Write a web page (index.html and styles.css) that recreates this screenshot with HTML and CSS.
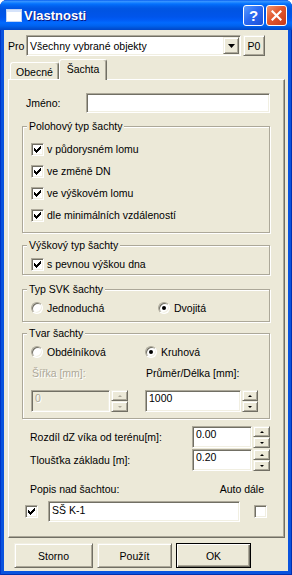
FILE: index.html
```html
<!DOCTYPE html>
<html lang="cs">
<head>
<meta charset="utf-8">
<title>Vlastnosti</title>
<link rel="stylesheet" href="styles.css">
</head>
<body>
<div class="window">
  <div class="titlebar">
    <svg class="app-icon" width="16" height="13" viewBox="0 0 16 13"><rect x="0.5" y="0.5" width="15" height="12" fill="#fff" stroke="#BFD3F5"/><rect x="1" y="1" width="14" height="2" fill="#D6E3FA"/></svg>
    <span class="title">Vlastnosti</span>
    <span class="tb-btn help">?</span>
    <span class="tb-btn close"><svg width="11" height="11" viewBox="0 0 11 11"><path d="M1.5 1.5 L9.5 9.5 M9.5 1.5 L1.5 9.5" stroke="#fff" stroke-width="2.2" stroke-linecap="square"/></svg></span>
  </div>
  <div class="client">
    <div class="row-pro">
      <span class="lbl-pro">Pro</span>
      <div class="combo sunken">
        <span class="combo-text">Všechny vybrané objekty</span>
        <span class="combo-btn raised"><svg width="7" height="4" viewBox="0 0 7 4"><polygon points="0,0 7,0 3.5,4" fill="#000"/></svg></span>
      </div>
      <button class="btn raised btn-p0">P0</button>
    </div>
    <div class="tabs">
      <div class="tab">Obecné</div>
      <div class="tab active">Šachta</div>
    </div>
    <div class="panel">
      <div class="row-name">
        <span class="lbl-name">Jméno:</span>
        <div class="edit sunken name-edit"></div>
      </div>

      <fieldset class="grp grp1">
        <legend>Polohový typ šachty</legend>
        <div class="row r22"><span class="chk sunken"><svg width="7" height="7" viewBox="0 0 7 7"><path d="M0 2h1v1h1v1h1v-1h1v-1h1v-1h1v-1h1v3h-1v1h-1v1h-1v1h-1v1h-1v-1h-1v-1h-1z" fill="#000"/></svg></span><span>v půdorysném lomu</span></div>
        <div class="row r22"><span class="chk sunken"><svg width="7" height="7" viewBox="0 0 7 7"><path d="M0 2h1v1h1v1h1v-1h1v-1h1v-1h1v-1h1v3h-1v1h-1v1h-1v1h-1v1h-1v-1h-1v-1h-1z" fill="#000"/></svg></span><span>ve změně DN</span></div>
        <div class="row r22"><span class="chk sunken"><svg width="7" height="7" viewBox="0 0 7 7"><path d="M0 2h1v1h1v1h1v-1h1v-1h1v-1h1v-1h1v3h-1v1h-1v1h-1v1h-1v1h-1v-1h-1v-1h-1z" fill="#000"/></svg></span><span>ve výškovém lomu</span></div>
        <div class="row r22"><span class="chk sunken"><svg width="7" height="7" viewBox="0 0 7 7"><path d="M0 2h1v1h1v1h1v-1h1v-1h1v-1h1v-1h1v3h-1v1h-1v1h-1v1h-1v1h-1v-1h-1v-1h-1z" fill="#000"/></svg></span><span>dle minimálních vzdáleností</span></div>
      </fieldset>

      <fieldset class="grp grp2">
        <legend>Výškový typ šachty</legend>
        <div class="row r18"><span class="chk sunken"><svg width="7" height="7" viewBox="0 0 7 7"><path d="M0 2h1v1h1v1h1v-1h1v-1h1v-1h1v-1h1v3h-1v1h-1v1h-1v1h-1v1h-1v-1h-1v-1h-1z" fill="#000"/></svg></span><span>s pevnou výškou dna</span></div>
      </fieldset>

      <fieldset class="grp grp3">
        <legend>Typ SVK šachty</legend>
        <div class="row r18">
          <div class="col-a3"><span class="rad"></span><span>Jednoduchá</span></div>
          <div class="col-b"><span class="rad on"></span><span>Dvojitá</span></div>
        </div>
      </fieldset>

      <fieldset class="grp grp4">
        <legend>Tvar šachty</legend>
        <div class="row r18">
          <div class="col-a4"><span class="rad"></span><span>Obdélníková</span></div>
          <div class="col-b"><span class="rad on"></span><span>Kruhová</span></div>
        </div>
        <div class="row r18 lbl-row">
          <div class="col-a4"><span class="disabled">Šířka [mm]:</span></div>
          <div class="col-b"><span class="lbl-b">Průměr/Délka [mm]:</span></div>
        </div>
        <div class="row spin-row">
          <div class="col-a4">
            <div class="spin">
              <div class="edit sunken edit-dis w79"><span class="dis-text">0</span></div>
              <div class="spin-btns"><span class="sb raised"><i class="up dis"></i></span><span class="sb raised"><i class="down dis"></i></span></div>
            </div>
          </div>
          <div class="col-b">
            <div class="spin">
              <div class="edit sunken w96">1000</div>
              <div class="spin-btns w16"><span class="sb raised"><i class="up"></i></span><span class="sb raised"><i class="down"></i></span></div>
            </div>
          </div>
        </div>
      </fieldset>

      <div class="field-row fr1">
        <span class="lbl-field">Rozdíl dZ víka od terénu[m]:</span>
        <div class="spin">
          <div class="edit sunken w60">0.00</div>
          <div class="spin-btns"><span class="sb raised"><i class="up"></i></span><span class="sb raised"><i class="down"></i></span></div>
        </div>
      </div>
      <div class="field-row fr2">
        <span class="lbl-field">Tloušťka základu [m]:</span>
        <div class="spin">
          <div class="edit sunken w60">0.20</div>
          <div class="spin-btns"><span class="sb raised"><i class="up"></i></span><span class="sb raised"><i class="down"></i></span></div>
        </div>
      </div>

      <div class="popis-row">
        <span>Popis nad šachtou:</span>
        <span>Auto dále</span>
      </div>
      <div class="popis-edit-row">
        <span class="chk sunken"><svg width="7" height="7" viewBox="0 0 7 7"><path d="M0 2h1v1h1v1h1v-1h1v-1h1v-1h1v-1h1v3h-1v1h-1v1h-1v1h-1v1h-1v-1h-1v-1h-1z" fill="#000"/></svg></span>
        <div class="edit sunken popis-edit">SŠ K-1</div>
        <span class="chk sunken chk-auto"></span>
      </div>
    </div>

    <div class="buttons">
      <button class="btn raised b-storno">Storno</button>
      <button class="btn raised b-pouzit">Použít</button>
      <button class="btn btn-default b-ok">OK</button>
    </div>
  </div>
</div>
</body>
</html>
```

FILE: styles.css
```css
* { box-sizing: border-box; }
html, body { margin: 0; padding: 0; }
body {
  background: #ffffff;
  font-family: "Liberation Sans", Arial, sans-serif;
  font-size: 10.5px;
  color: #000;
}

.window {
  width: 292px;
  height: 575px;
  display: flex;
  flex-direction: column;
  background: #0A53DE;
  border-radius: 7px 7px 0 0;
  overflow: hidden;
  box-shadow: inset 1px 0 0 #0036C8, inset -1px 0 0 #0030B0, inset 0 -1px 0 #0030B0;
}

/* ---------- title bar ---------- */
.titlebar {
  flex: none;
  height: 30px;
  display: flex;
  align-items: center;
  padding: 0 5px 0 6px;
  background: linear-gradient(to bottom,
    #0058EE 0%, #3A93FF 4%, #288EFF 7%, #127DFF 10%, #036FFC 14%,
    #0262EE 20%, #0057E5 28%, #0054E3 36%, #0055EB 56%, #005BF5 66%,
    #026AFE 76%, #0062EF 86%, #0052D6 94%, #0046C8 100%);
}
.app-icon { flex: none; display: block; }
.title {
  margin-left: 2px;
  padding-top: 1px;
  color: #fff;
  font-weight: bold;
  font-size: 13px;
  font-family: "Liberation Sans", Arial, sans-serif;
  text-shadow: 1px 1px 0 #0A1883;
}
.tb-btn {
  flex: none;
  width: 21px;
  height: 21px;
  border: 1px solid #fff;
  border-radius: 3px;
  display: flex;
  align-items: center;
  justify-content: center;
  color: #fff;
}
.help {
  margin-left: auto;
  background: linear-gradient(135deg, #5A9BFF 0%, #2C6BF2 45%, #1B4FD8 100%);
  font-weight: bold;
  font-size: 15px;
  line-height: 1;
  font-family: "Liberation Sans", Arial, sans-serif;
}
.close {
  margin-left: 2px;
  background: linear-gradient(135deg, #F0946F 0%, #E2582E 45%, #C7391A 100%);
}

/* ---------- client ---------- */
.client {
  flex: 1;
  margin: 0 4px 4px;
  background: #ECE9D8;
  display: flex;
  flex-direction: column;
}

.sunken {
  border: 1px solid;
  border-color: #ACA899 #FFFFFF #FFFFFF #ACA899;
  box-shadow: inset 1px 1px 0 #716F64, inset -1px -1px 0 #F1EFE2;
}
.raised {
  border: 1px solid;
  border-color: #F1EFE2 #716F64 #716F64 #F1EFE2;
  box-shadow: inset 1px 1px 0 #FFFFFF, inset -1px -1px 0 #ACA899;
  background: #ECE9D8;
}

.btn {
  font-family: "Liberation Sans", Arial, sans-serif;
  font-size: 10.5px;
  color: #000;
  padding: 0;
  margin: 0;
  display: flex;
  align-items: center;
  justify-content: center;
}

/* Pro row */
.row-pro {
  display: flex;
  align-items: center;
  height: 21px;
  margin-top: 5px;
  padding-left: 4px;
}
.lbl-pro { width: 18px; }
.combo {
  width: 215px;
  height: 21px;
  padding: 1px;
  display: flex;
  align-items: center;
  background: #fff;
}
.combo-text { flex: 1; padding-left: 2px; }
.combo-btn {
  width: 16px;
  height: 17px;
  display: flex;
  align-items: center;
  justify-content: center;
}
.combo-btn svg { display: block; }
.btn-p0 { margin-left: 2px; width: 22px; height: 21px; }

/* tabs */
.tabs {
  display: flex;
  align-items: flex-end;
  height: 21px;
  margin-top: 3px;
  padding-left: 6px;
  z-index: 1;
}
.tab {
  height: 17px;
  margin-bottom: 1px;
  width: 49px;
  border: 1px solid;
  border-bottom: none;
  border-color: #fff #716F64 transparent #fff;
  border-radius: 3px 3px 0 0;
  box-shadow: inset -1px 0 0 #ACA899;
  background: #ECE9D8;
  text-align: center;
  padding-top: 2px;
  line-height: 14px;
}
.tab.active {
  height: 21px;
  margin-bottom: 0;
  width: 48px;
}

/* panel */
.panel {
  margin: -1px 0 0 4px;
  width: 277px;
  height: 459px;
  border: 1px solid;
  border-color: #fff #716F64 #716F64 #fff;
  box-shadow: inset -1px -1px 0 #ACA899;
  display: flex;
  flex-direction: column;
}

.row-name {
  display: flex;
  align-items: center;
  margin-top: 13px;
  padding-left: 17px;
  height: 20px;
}
.lbl-name { width: 60px; }
.edit {
  background: #fff;
  padding: 1px 3px;
  line-height: 13px;
  white-space: nowrap;
}
.name-edit { width: 184px; height: 20px; }

/* group boxes */
.grp {
  margin: 0 0 0 13px;
  width: 248px;
  min-width: 0;
  padding: 0;
  border: 1px solid #ACA899;
  box-shadow: 1px 1px 0 #fff, inset 1px 1px 0 #fff;
}
.grp legend {
  margin-left: 4px;
  padding: 0 2px;
  line-height: 13px;
  background: #ECE9D8;
}
.grp1 { margin-top: 7px; padding: 5px 0 6px; }
.grp2 { margin-top: 6px; padding: 3px 0 1px; }
.grp3 { margin-top: 8px; padding: 3px 0 4px; }
.grp4 { margin-top: 5px; padding: 3px 0 6px; }

.row {
  display: flex;
  align-items: center;
  padding-left: 8px;
}
.r22 { height: 22px; }
.r18 { height: 18px; }
.lbl-row { margin-top: 3px; }
.spin-row { margin-top: 8px; height: 22px; }

.col-a3, .col-a4, .col-b { display: flex; align-items: center; }
.col-a3 { width: 127px; }
.col-a4 { width: 114px; }
.lbl-row .col-a4 { padding-left: 1px; }
.lbl-b { padding-left: 1px; }

.chk {
  flex: none;
  width: 13px;
  height: 13px;
  padding: 2px;
  background: #fff;
  margin-right: 3px;
  display: block;
}
.chk svg { display: block; }

.rad {
  flex: none;
  width: 12px;
  height: 12px;
  border-radius: 50%;
  border: 1px solid;
  border-color: #ACA899 #fff #fff #ACA899;
  box-shadow: inset 1px 1px 0 #716F64, inset -1px -1px 0 #F1EFE2;
  background: #fff;
  margin-right: 4px;
  display: flex;
  align-items: center;
  justify-content: center;
}
.rad.on::after {
  content: "";
  width: 4px;
  height: 4px;
  border-radius: 50%;
  background: #000;
}

.disabled, .dis-text {
  color: #ACA899;
  text-shadow: 1px 1px 0 #fff;
}

/* spin controls */
.spin { display: flex; height: 22px; }
.spin .edit { height: 22px; }
.edit-dis { background: #ECE9D8; }
.w79 { width: 79px; }
.w96 { width: 96px; }
.w60 { width: 60px; }
.spin-btns {
  margin-left: 1px;
  width: 17px;
  display: flex;
  flex-direction: column;
}
.spin-btns.w16 { width: 16px; }
.sb {
  height: 11px;
  display: flex;
  align-items: center;
  justify-content: center;
}
.sb i { display: block; width: 0; height: 0; border-left: 2px solid transparent; border-right: 2px solid transparent; }
.sb i.up { border-bottom: 2px solid #000; }
.sb i.down { border-top: 2px solid #000; }
.sb i.up.dis { border-bottom-color: #ACA899; }
.sb i.down.dis { border-top-color: #ACA899; }

.field-row {
  display: flex;
  align-items: center;
  height: 22px;
  padding-left: 21px;
}
.fr1 { margin-top: 7px; }
.fr2 { margin-top: 1px; }
.lbl-field { width: 162px; }

.popis-row {
  display: flex;
  justify-content: space-between;
  align-items: center;
  height: 14px;
  margin-top: 11px;
  padding: 0 20px 0 21px;
}
.popis-edit-row {
  display: flex;
  align-items: center;
  height: 21px;
  margin-top: 5px;
  padding-left: 16px;
}
.popis-edit-row .chk { margin-right: 10px; }
.popis-edit { width: 192px; height: 21px; padding-top: 2px; }
.chk-auto { margin: 0 0 0 14px; }

/* bottom buttons */
.buttons {
  display: flex;
  gap: 4px;
  height: 25px;
  margin-top: 5px;
  padding-left: 10px;
}
.buttons .btn { height: 25px; }
.b-storno { width: 79px; }
.b-pouzit { width: 75px; }
.b-ok { width: 75px; }
.btn-default {
  border: 1px solid #000;
  background: #ECE9D8;
  box-shadow: inset 1px 1px 0 #fff, inset -1px -1px 0 #716F64, inset -2px -2px 0 #ACA899;
}
```
